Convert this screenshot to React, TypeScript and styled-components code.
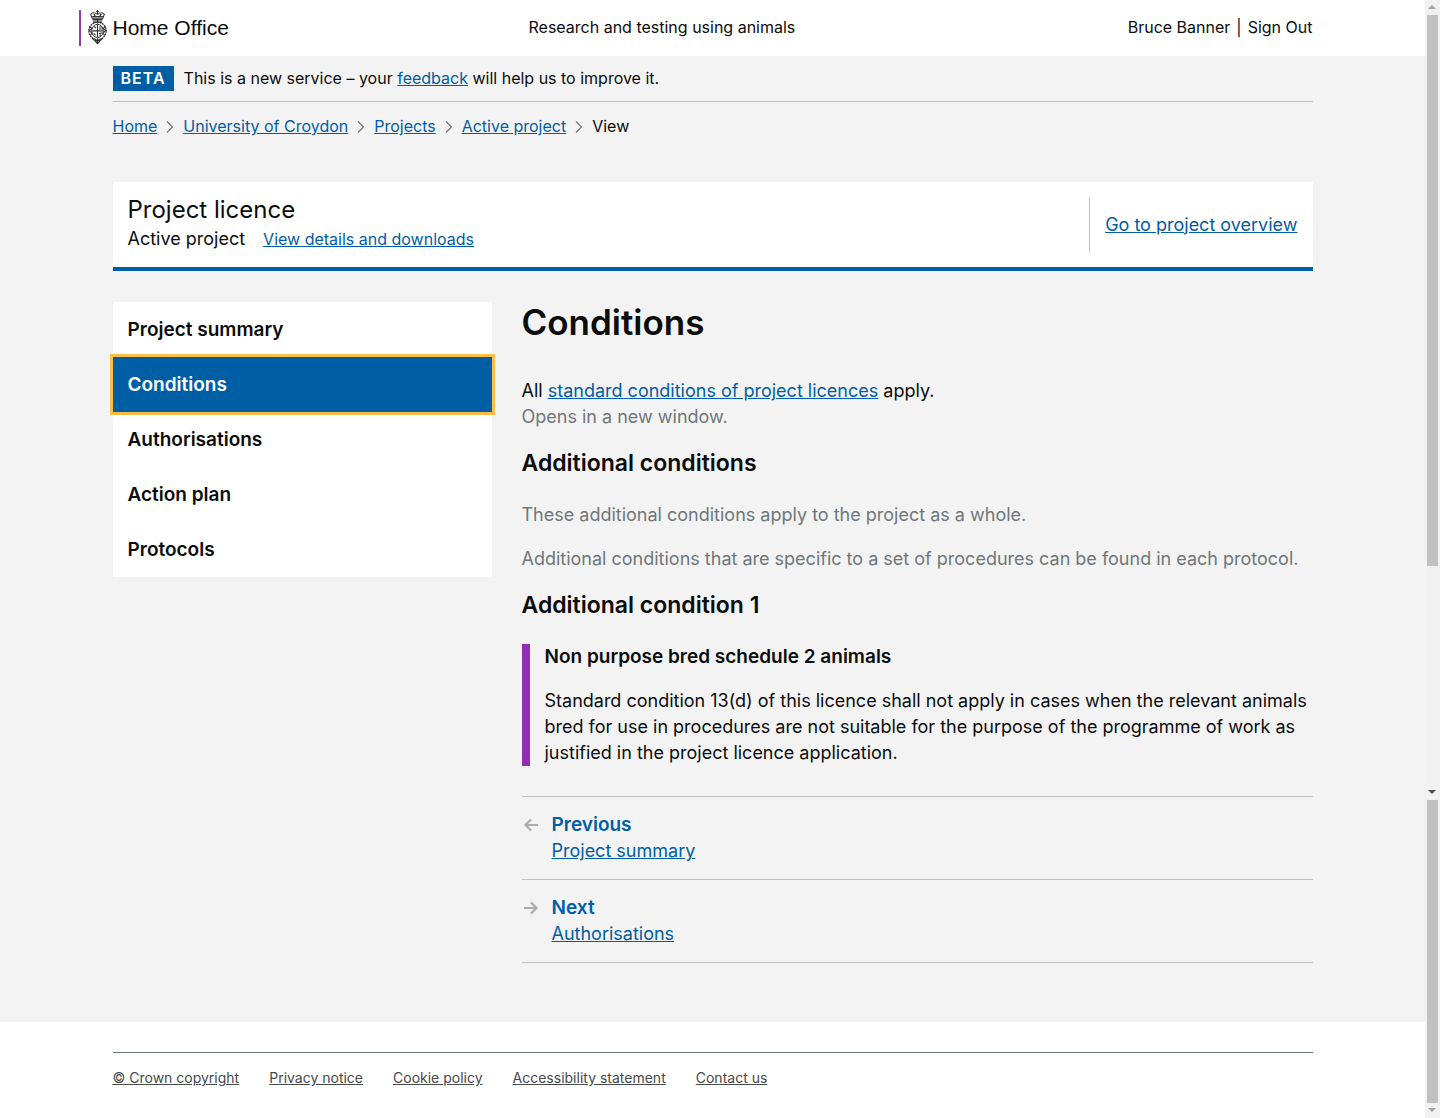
import React from "react";
import styled, { createGlobalStyle } from "styled-components";

const GlobalStyle = createGlobalStyle`
  *, *::before, *::after { box-sizing: border-box; }
  body {
    margin: 0;
    background: #fff;
    color: #0b0c0c;
    font-family: Inter, "Liberation Sans", sans-serif;
    font-size: 18px;
    line-height: 26px;
  }
  h1, h2, h3, p, ul, ol { margin: 0; padding: 0; }
  ul, ol { list-style: none; }
`;

const Shell = styled.div`
  display: flex;
  min-height: 100vh;
`;

const Page = styled.div`
  flex: 1;
  min-width: 0;
  display: flex;
  flex-direction: column;
`;

const Container = styled.div`
  width: 100%;
  max-width: 1200px;
  margin: 0 auto;
`;

const Link = styled.a`
  color: #005ea5;
  text-decoration: underline;
`;

const Header = styled.header`
  padding: 10px 0;
  font-size: 16px;
  line-height: 34px;
`;

const HeaderRow = styled(Container)`
  display: grid;
  grid-template-columns: 416px 1fr auto;
  align-items: start;
`;

const Logo = styled.a`
  display: flex;
  align-items: flex-start;
  justify-self: start;
  gap: 6px;
  height: 36px;
  margin-left: -34px;
  padding-left: 7px;
  border-left: 2px solid #8f3fb0;
  color: #0b0c0c;
  font-family: "Liberation Sans", Arial, sans-serif;
  font-size: 21px;
  line-height: 36px;
  text-decoration: none;
  white-space: nowrap;
`;

const Account = styled.nav`
  display: flex;
  gap: 6px;
`;

const PlainLink = styled.a`
  color: #0b0c0c;
  text-decoration: none;
`;

const Main = styled.main`
  flex: 1;
  background: #f3f3f3;
  padding-bottom: 59px;
`;

const Phase = styled.div`
  display: flex;
  align-items: center;
  gap: 10px;
  padding: 10px 0;
  border-bottom: 1px solid #bfc1c3;
  font-size: 16px;
  line-height: 25px;
`;

const Badge = styled.strong`
  padding: 0 8px;
  background: #005ea5;
  color: #fff;
  font-weight: 600;
  letter-spacing: 1px;
`;

const Crumbs = styled.ol`
  display: flex;
  align-items: center;
  gap: 9px;
  padding: 12px 0 0;
  font-size: 16px;
  line-height: 25px;
`;

const Crumb = styled.li`
  display: flex;
  align-items: center;
  gap: 9px;
`;

const LicenceBar = styled.section`
  display: flex;
  justify-content: space-between;
  margin-top: 43px;
  padding: 15px;
  background: #fff;
  border-bottom: 4px solid #005ea5;
`;

const LicenceTitle = styled.h2`
  font-size: 24px;
  font-weight: 400;
  line-height: 26px;
`;

const LicenceMeta = styled.div`
  display: flex;
  align-items: baseline;
  gap: 18px;
  padding-top: 3px;
`;

const SmallLink = styled(Link)`
  font-size: 16px;
`;

const Overview = styled.div`
  display: flex;
  align-items: center;
  padding-left: 15px;
  border-left: 1px solid #bfc1c3;
  min-height: 55px;
`;

const Columns = styled.div`
  display: flex;
  align-items: flex-start;
  gap: 30px;
  margin-top: 31px;
`;

const SideNav = styled.nav`
  flex: 0 0 379px;
  background: #fff;
`;

const SideLink = styled.a<{ $active?: boolean }>`
  display: block;
  padding: 0 15px;
  color: ${(p) => (p.$active ? "#fff" : "#0b0c0c")};
  background: ${(p) => (p.$active ? "#005ea5" : "#fff")};
  outline: ${(p) => (p.$active ? "3px solid #ffbf47" : "none")};
  position: ${(p) => (p.$active ? "relative" : "static")};
  font-size: 19px;
  font-weight: 600;
  line-height: 55px;
  text-decoration: none;
`;

const Content = styled.div`
  flex: 1;
  min-width: 0;
`;

const Title = styled.h1`
  margin-bottom: 35px;
  font-size: 35px;
  font-weight: 600;
  line-height: 41px;
`;

const Heading = styled.h2`
  margin: 18px 0 24px;
  font-size: 23px;
  font-weight: 600;
  line-height: 30px;
`;

const Muted = styled.p`
  color: #6f777b;
  & + & { margin-top: 18px; }
`;

const Hint = styled.span`
  display: block;
  color: #6f777b;
`;

const Condition = styled.article`
  margin: 24px 0 30px;
  padding-left: 15px;
  border-left: 8px solid #912eb5;
`;

const ConditionTitle = styled.h3`
  margin-bottom: 18px;
  font-size: 19px;
  font-weight: 600;
  line-height: 26px;
`;

const PagerItem = styled.a`
  display: flex;
  gap: 12px;
  padding: 15px 0;
  border-top: 1px solid #bfc1c3;
  color: #005ea5;
  text-decoration: none;

  &:last-child { border-bottom: 1px solid #bfc1c3; }
  svg { margin-top: 4px; }
`;

const PagerText = styled.span`
  display: flex;
  flex-direction: column;
  strong { font-size: 19px; font-weight: 600; }
`;

const PagerTarget = styled.span`
  text-decoration: underline;
`;

const Footer = styled.footer`
  padding: 30px 0;
`;

const FooterLinks = styled.ul`
  display: flex;
  gap: 30px;
  padding-top: 15px;
  border-top: 1px solid #6f777b;
  font-size: 14px;
  line-height: 20px;
  a { color: #454a4d; }
`;

const Rail = styled.div`
  flex: 0 0 15px;
  display: flex;
  flex-direction: column;
  background: #f1f1f1;
`;

const Track = styled.div<{ $grow: number }>`
  flex: ${(p) => p.$grow} 0 0;
  display: flex;
  flex-direction: column;
`;

const Thumb = styled.div<{ $share: number }>`
  flex: ${(p) => p.$share} 0 0;
  margin: 0 2px;
  background: #c1c1c1;
`;

const Space = styled.div<{ $share: number }>`
  flex: ${(p) => p.$share} 0 0;
`;

const Arrow = styled.div<{ $tone: string; $up?: boolean }>`
  flex: 0 0 15px;
  display: grid;
  place-items: center;
  padding: 0 1px 1px 0;
  &::after {
    content: "";
    border: 4px solid transparent;
    border-width: ${(p) => (p.$up ? "0 4px 4px" : "4px 4px 0")};
    border-${(p) => (p.$up ? "bottom" : "top")}-color: ${(p) => p.$tone};
  }
`;

function Crest() {
  return (
    <svg width="19" height="35" viewBox="0 0 19 36" fill="none" stroke="#333" aria-hidden="true">
      <path d="M9.500 0v4M8 1.500h3M2.500 4.500c2-2.500 5-1.500 7 0 2-1.500 5-2.500 7 0l-1.700 4.500H4.200z" strokeWidth="1.100" />
      <path d="M4 7h11M4.500 10h10M6 4l1 3M13 4l-1 3" strokeWidth="1.500" />
      <path d="M5 12.500h9M9.500 10v4M6 11.500v2M13 11.500v2" strokeWidth="1.200" />
      <ellipse cx="9.500" cy="21.500" rx="8.900" ry="9" strokeWidth="1.300" strokeDasharray="2 .6" />
      <ellipse cx="9.500" cy="21.500" rx="6" ry="6.800" strokeWidth="1" />
      <path d="M9.500 15v13M4 21.500h11M6 17l2 1.500M11 17.500h3M11 19.500h3M5.500 24l2 2M11 24.500l3-1M11.500 26.500l1.500-1M1 17l3 2-3 2 3 3-2 2M18 17l-3 2 3 2-3 3 2 2" strokeWidth="1.100" />
      <path d="M4 29l3 2.500h5l3-2.500M7 32l2.500 2.500L12 32M9.500 29v5" strokeWidth="1.300" />
    </svg>
  );
}

function Chevron() {
  return (
    <svg width="8" height="12" viewBox="0 0 8 12" fill="none" stroke="#6f777b" strokeWidth="1.200" aria-hidden="true">
      <path d="M1 .5L6.500 6 1 11.500" />
    </svg>
  );
}

function PagerArrow({ back }: { back?: boolean }) {
  return (
    <svg width="18" height="18" viewBox="0 0 18 18" fill="none" stroke="#a9abad" strokeWidth="2.200" aria-hidden="true">
      <path d={back ? "M16 9H3.500M9 3.500L3.500 9 9 14.500" : "M2 9h12.500M9 3.500L14.500 9 9 14.500"} />
    </svg>
  );
}

const trail = ["Home", "University of Croydon", "Projects", "Active project"];
const sections = ["Project summary", "Conditions", "Authorisations", "Action plan", "Protocols"];
const footerLinks = ["© Crown copyright", "Privacy notice", "Cookie policy", "Accessibility statement", "Contact us"];

export default function App() {
  return (
    <Shell>
      <GlobalStyle />
      <Page>
        <Header>
          <HeaderRow>
            <Logo href="#home"><Crest />Home Office</Logo>
            <span>Research and testing using animals</span>
            <Account aria-label="Account">
              <PlainLink href="#account">Bruce Banner</PlainLink>
              <span>|</span>
              <PlainLink href="#signout">Sign Out</PlainLink>
            </Account>
          </HeaderRow>
        </Header>
        <Main>
          <Container>
            <Phase>
              <Badge>BETA</Badge>
              <span>This is a new service – your <Link href="#feedback">feedback</Link> will help us to improve it.</span>
            </Phase>
            <nav aria-label="Breadcrumb">
              <Crumbs>
                {trail.map((t) => (
                  <Crumb key={t}><Link href="#crumb">{t}</Link><Chevron /></Crumb>
                ))}
                <Crumb aria-current="page">View</Crumb>
              </Crumbs>
            </nav>
            <LicenceBar>
              <div>
                <LicenceTitle>Project licence</LicenceTitle>
                <LicenceMeta>
                  <span>Active project</span>
                  <SmallLink href="#details">View details and downloads</SmallLink>
                </LicenceMeta>
              </div>
              <Overview><Link href="#overview">Go to project overview</Link></Overview>
            </LicenceBar>
            <Columns>
              <SideNav aria-label="Sections">
                {sections.map((s) => (
                  <SideLink key={s} href="#section" $active={s === "Conditions"}>{s}</SideLink>
                ))}
              </SideNav>
              <Content>
                <Title>Conditions</Title>
                <p>
                  All <Link href="#standard">standard conditions of project licences</Link> apply.
                  <Hint>Opens in a new window.</Hint>
                </p>
                <Heading>Additional conditions</Heading>
                <Muted>These additional conditions apply to the project as a whole.</Muted>
                <Muted>Additional conditions that are specific to a set of procedures can be found in each protocol.</Muted>
                <Heading>Additional condition 1</Heading>
                <Condition>
                  <ConditionTitle>Non purpose bred schedule 2 animals</ConditionTitle>
                  <p>
                    Standard condition 13(d) of this licence shall not apply in cases when the relevant animals bred for
                    use in procedures are not suitable for the purpose of the programme of work as justified in the
                    project licence application.
                  </p>
                </Condition>
                <nav aria-label="Pagination">
                  <PagerItem href="#summary">
                    <PagerArrow back />
                    <PagerText><strong>Previous</strong><PagerTarget>Project summary</PagerTarget></PagerText>
                  </PagerItem>
                  <PagerItem href="#authorisations">
                    <PagerArrow />
                    <PagerText><strong>Next</strong><PagerTarget>Authorisations</PagerTarget></PagerText>
                  </PagerItem>
                </nav>
              </Content>
            </Columns>
          </Container>
        </Main>
        <Footer>
          <Container>
            <FooterLinks>
              {footerLinks.map((t) => <li key={t}><a href="#footer">{t}</a></li>)}
            </FooterLinks>
          </Container>
        </Footer>
      </Page>
      <Rail aria-hidden="true">
        <Track $grow={800}>
          <Arrow $up $tone="#a3a3a3" />
          <Thumb $share={551} />
          <Space $share={219} />
          <Arrow $tone="#505050" />
        </Track>
        <Track $grow={318}>
          <Thumb $share={303} />
          <Arrow $tone="#a3a3a3" />
        </Track>
      </Rail>
    </Shell>
  );
}
